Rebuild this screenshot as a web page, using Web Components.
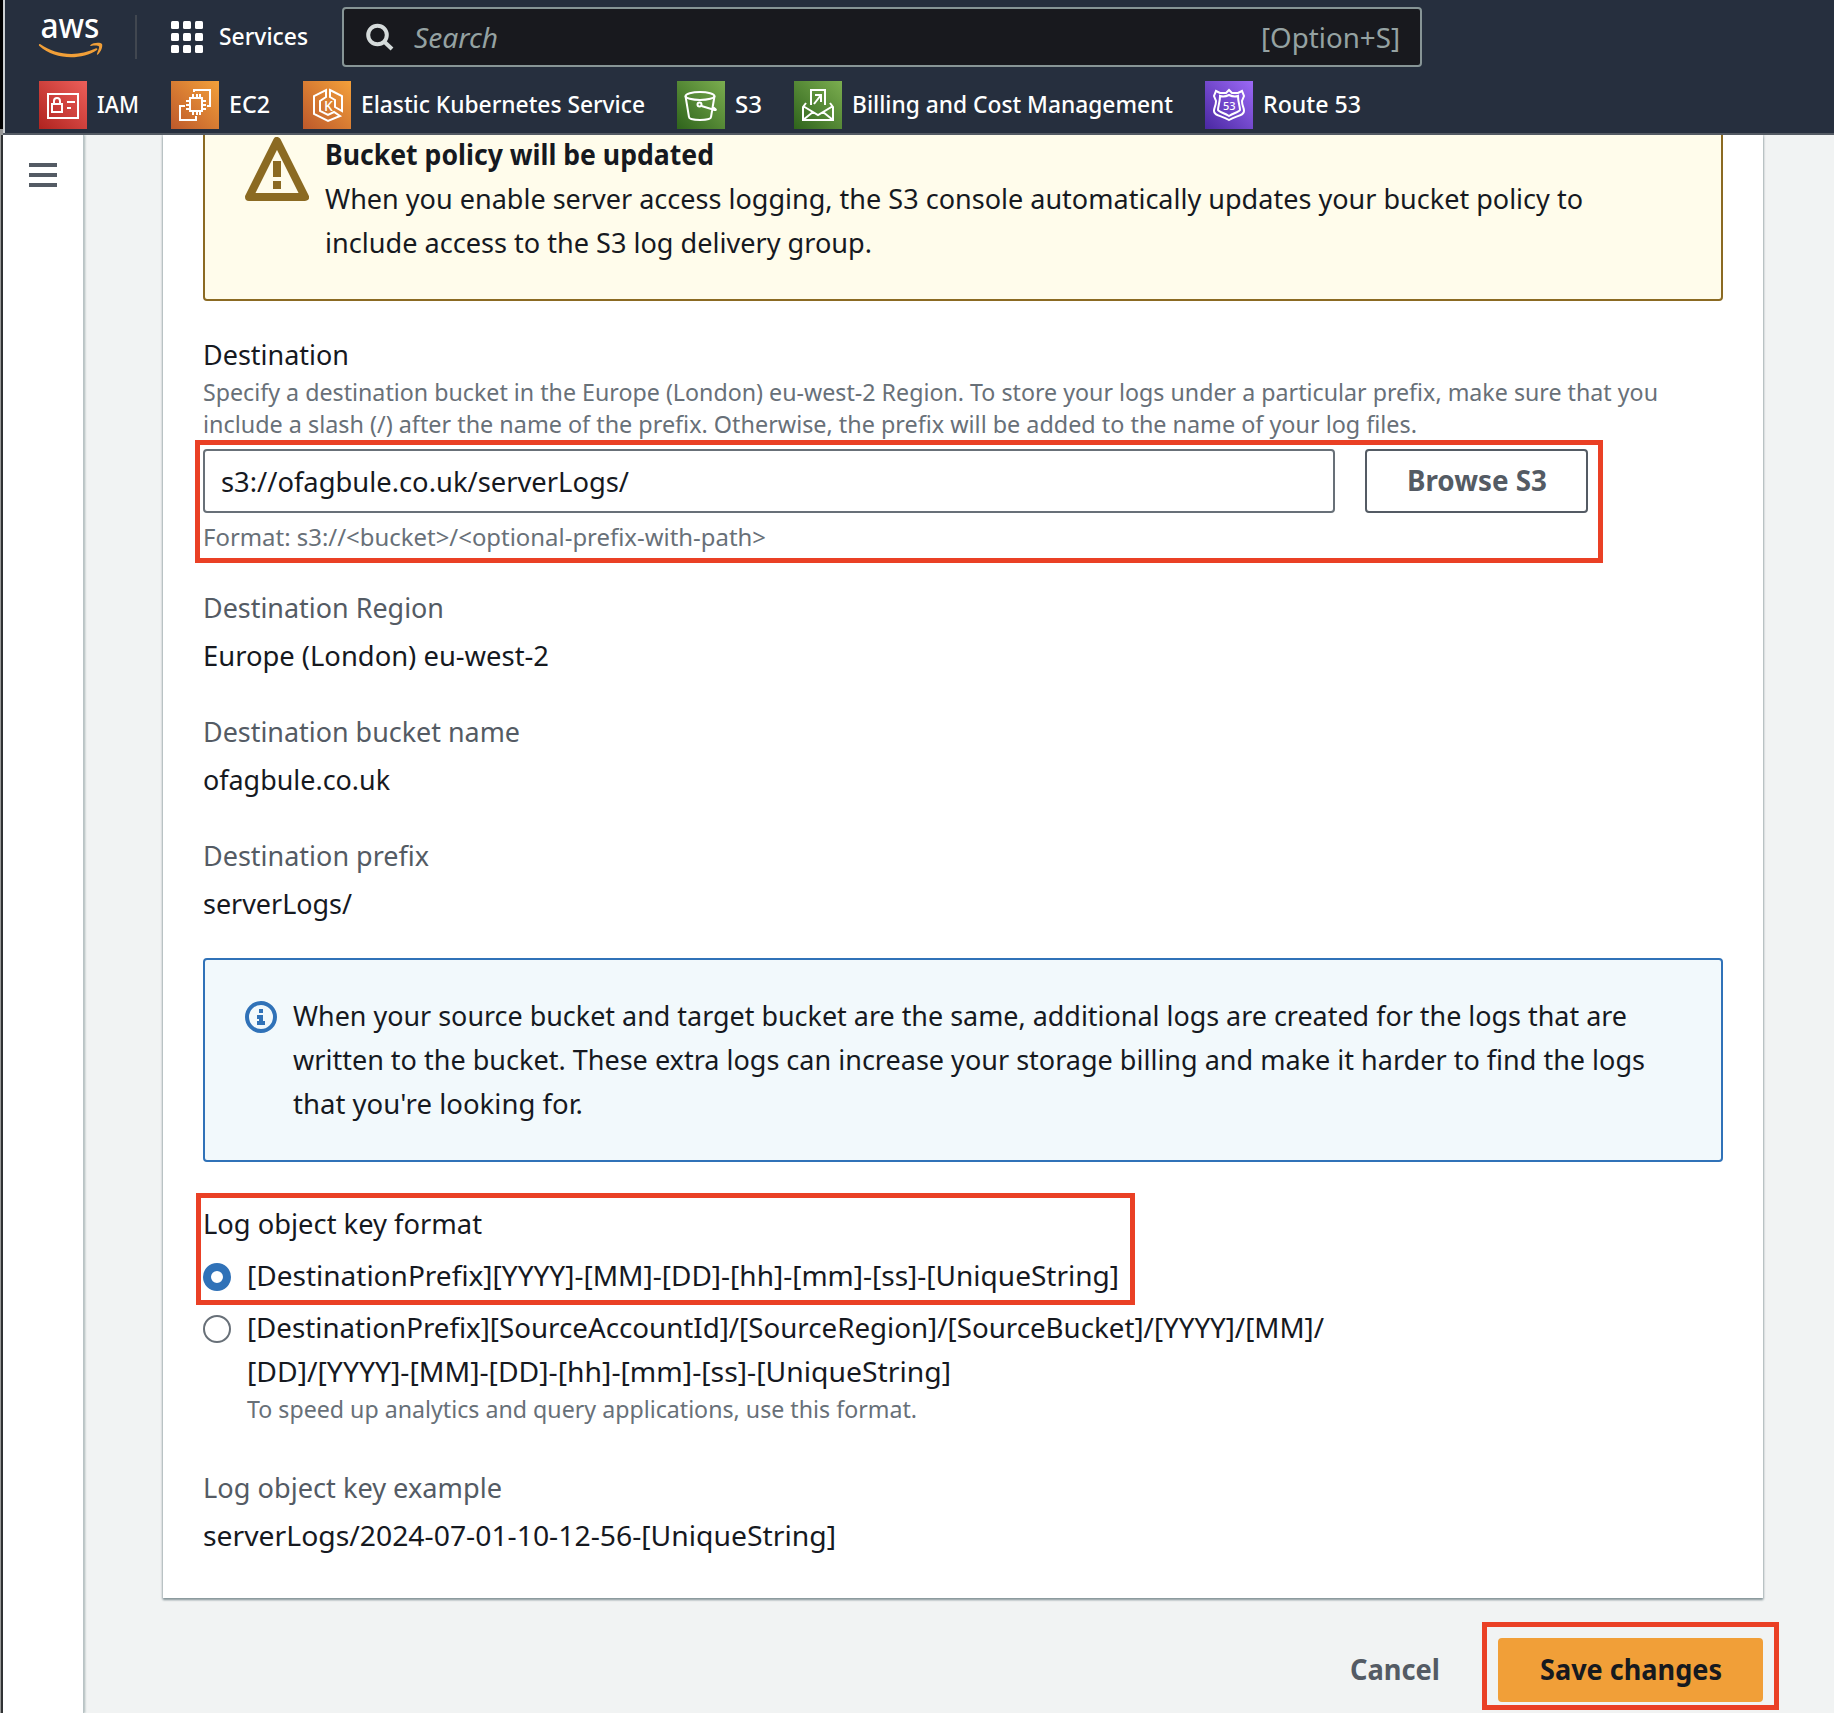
<!DOCTYPE html>
<html lang="en">
<head>
<meta charset="utf-8">
<title>Edit server access logging</title>
<style>
html,body{margin:0;height:1713px;overflow:hidden;background:#f1f3f3}
body{font:28px/44px "Noto Sans","Open Sans",sans-serif;font-weight:450;color:#16191f}
</style>
</head>
<body>
<console-app></console-app>
<script>
const define = (name, html, after) => {
  const t = document.createElement('template');
  t.innerHTML = html;
  customElements.define(name, class extends HTMLElement {
    constructor() {
      super();
      this.attachShadow({ mode: 'open' }).appendChild(t.content.cloneNode(true));
    }
    connectedCallback() { if (after) after(this, this.shadowRoot); }
  });
};

// A single line of text, condensed or widened to the measure given in "w".
define('text-line', `<style>
:host{display:block;white-space:nowrap;flex:none}
span{display:inline-block;transform-origin:0 50%}
</style><span><slot></slot></span>`, (el, root) => {
  const w = +el.getAttribute('w'), s = root.querySelector('span');
  el.style.width = w + 'px';
  const n = s.getBoundingClientRect().width;
  if (w && n) s.style.transform = 'translateY(-1px) scaleX(' + (w / n) + ')';
});

define('service-link', `<style>
:host{display:flex;align-items:center;gap:10px;font-size:24px;font-weight:550;line-height:48px;color:#fff;flex:none}
.i{width:48px;height:48px;display:block}
::slotted(svg){display:block;width:48px;height:48px;fill:none;stroke:#fff;stroke-width:2}
:host([tone=red]) .i{background:linear-gradient(45deg,#b0231f,#ed5f5a)}
:host([tone=orange]) .i{background:linear-gradient(45deg,#bd592b,#f3a03a)}
:host([tone=green]) .i{background:linear-gradient(45deg,#2f641c,#7bad4f)}
:host([tone=purple]) .i{background:linear-gradient(45deg,#4a28a2,#9c69f6)}
</style><div class="i"><slot name="icon"></slot></div><slot></slot>`);

define('search-box', `<style>
:host{display:flex;align-items:center;box-sizing:border-box;width:1080px;height:60px;border:2px solid #879596;border-radius:4px;background:#18191e;color:#95a2a2;padding:0 20px 0 22px}
svg{width:28px;height:28px;margin-right:20px}
i{flex:1}
text-line{position:relative;top:1px}
</style><svg viewBox="0 0 28 28" fill="none" stroke="#d5dbdb" stroke-width="4"><circle cx="11.5" cy="12" r="9.3"/><path d="M18 18.5L26 26"/></svg>
<i><text-line w="84">Search</text-line></i><text-line w="139">[Option+S]</text-line>`);

define('console-header', `<style>
:host{display:flex;flex-direction:column;box-sizing:border-box;height:135px;background:#262f3e;border-bottom:2px solid #545b64;margin-left:3px;box-shadow:inset 2px 0 #ccd0d3}
.top{display:flex;height:74px;padding-left:36px}
.logo{width:64px;height:48px;margin-top:14px;display:block;overflow:visible}
.div{width:2px;height:44px;background:#414750;margin:15px 34px 0 32px}
.grid{display:grid;grid-template-columns:repeat(3,8px);gap:4px;margin-top:21px;height:32px;grid-auto-rows:8px}
.grid b{background:#fff;border-radius:1.5px}
.svc{font-size:24px;font-weight:550;line-height:74px;color:#fff;margin:0 34px 0 16px}
search-box{margin-top:7px}
.fav{display:flex;height:48px;margin-top:7px;padding-left:36px}
</style>
<div class="top">
<svg class="logo" viewBox="0 0 64 48"><text x="1.5" y="24" font-family="Noto Sans" font-weight="500" font-size="35" fill="#fff" textLength="59" lengthAdjust="spacingAndGlyphs">aws</text>
<path d="M1 30C17 41.500 39 43 56.500 34.500C58 33.700 59 35 58 36C42 46.500 16 46 0.400 32C-.6 31 0 29.500 1 30Z" fill="#f19f38"/><path d="M51.500 31C54 28.500 61.500 28.200 63 30C64 32.500 62 37.800 58.800 40.500C58 41 57.700 40.500 58 39.700C59 37 60.500 33.500 60 32.500C59 31.300 55 31.500 52 31.900C51 32 51 31.500 51.500 31Z" fill="#f19f38"/></svg>
<div class="div"></div>
<div class="grid"><b></b><b></b><b></b><b></b><b></b><b></b><b></b><b></b><b></b></div>
<text-line class="svc" w="89">Services</text-line>
<search-box></search-box>
</div>
<div class="fav">
<service-link tone="red" style="width:132px"><svg slot="icon" viewBox="0 0 48 48"><path d="M9 13h30v24H9zM13 23h10v8H13zM15 23v-3a3 3 0 0 1 6 0v3M28 21h8M28 27h4"/></svg><text-line w="42">IAM</text-line></service-link>
<service-link tone="orange" style="width:132px"><svg slot="icon" viewBox="0 0 48 48"><path d="M19 17h12v13H19zM22 17v-4M26 17v-4M29 17v-4M22 34v-4M26 34v-4M29 34v-4M19 20h-4M19 24h-4M19 28h-4M35 20h-4M35 24h-4M35 28h-4M23 11V9h16v16h-3M14 25H9v14h16v-4"/></svg><text-line w="41">EC2</text-line></service-link>
<service-link tone="orange" style="width:374px"><svg slot="icon" viewBox="0 0 48 48"><path d="M23 9v7l-6 4v10l8 4 6-3 6 4-12 5-14-7V15zM27 9l12 6v15l-7-4v-7l-5-3z"/><text x="21" y="29.500" font-family="Noto Sans" font-size="14" fill="#fff" stroke="none">K</text></svg><text-line w="284">Elastic Kubernetes Service</text-line></service-link>
<service-link tone="green" style="width:117px"><svg slot="icon" viewBox="0 0 48 48"><ellipse cx="23" cy="15" rx="14.500" ry="4"/><path d="M8.500 15l3.500 21c0 4 22 4 22 0l3.500-21M24.500 25l13 4c2 .2 2-.6-1-2.500"/><circle cx="22.500" cy="23.500" r="2"/></svg><text-line w="27">S3</text-line></service-link>
<service-link tone="green" style="width:411px"><svg slot="icon" viewBox="0 0 48 48"><path d="M17 24V9h14v15M12 22l-3 4v13h30V26l-3-4M9 25l15 9 15-9M9 39l10-8M39 39l-10-8M20 23l7-9M21 14h6v7"/></svg><text-line w="321">Billing and Cost Management</text-line></service-link>
<service-link tone="purple"><svg slot="icon" viewBox="0 0 48 48"><path d="M24 9l-3 3h-6l-4-2-2 5 2 5c0 5-2 6-2 10 0 5 7 4 15 9 8-5 15-4 15-9 0-4-2-5-2-10l2-5-2-5-4 2h-6z"/><path d="M24 14c-4 2-6 2-9 1 0 6-2 10-2 14 1 2 6 3 11 6 5-3 10-4 11-6 0-4-2-8-2-14-3 1-5 1-9-1z"/><text x="18" y="29" font-family="Noto Sans" font-weight="500" font-size="11" fill="#fff" stroke="none">53</text></svg><text-line w="98">Route 53</text-line></service-link>
</div>`);

define('side-rail', `<style>
:host{display:block;width:80px;background:#fff;border-left:2px solid #303234;margin-left:1px;border-right:1px solid #b9c3c5;box-shadow:1px 0 2px #aab7b8;z-index:1}
div{display:flex;flex-direction:column;gap:6px;padding:28px 0 0 26px}
b{width:28px;height:4px;background:#545b64}
</style><div><b></b><b></b><b></b></div>`);

define('alert-box', `<style>
:host{display:flex;box-sizing:border-box;width:1520px;border:2px solid #3072b8;border-radius:4px;background:#f2f9fc;padding:34px 40px}
svg{flex:none;display:block}
.warn{display:none;width:64px;height:64px;margin:4px 16px 0 0}
.info{width:32px;height:32px;margin:7px 16px 0 0}
:host([type=warning]){border-color:#8b6a22;background:#fffceb}
:host([type=warning]) .warn{display:block}
:host([type=warning]) .info{display:none}
</style>
<svg class="warn" viewBox="0 0 64 64" fill="none" stroke="#8b6a22"><path d="M32 4L60 60H4Z" stroke-width="8" stroke-linejoin="round"/><path d="M32 24v16M32 44v8" stroke-width="8"/></svg>
<svg class="info" viewBox="0 0 32 32"><circle cx="16" cy="16" r="14" fill="none" stroke="#3072b8" stroke-width="4"/><path d="M14 8h4v4h-4zM12 14h6v6h2v4h-8v-4h2v-2h-2z" fill="#3072b8"/></svg>
<div><slot></slot></div>`);

define('small-text', `<style>:host{display:block;font-size:24px;line-height:32px;color:#687078}</style><slot></slot>`);

define('key-value', `<style>
:host{display:flex;flex-direction:column;gap:4px}
.k{color:#545b64}
</style><div class="k"><slot name="label"></slot></div><div><slot></slot></div>`);

define('text-field', `<style>
:host{display:block;box-sizing:border-box;width:1132px;height:64px;border:2px solid #687078;border-radius:4px;background:#fff;padding:0 16px;line-height:62px}
</style><slot></slot>`);

define('action-button', `<style>
:host{display:flex;justify-content:center;box-sizing:border-box;height:64px;line-height:61px;border:2px solid #545b64;border-radius:4px;color:#545b64;font-weight:700}
:host([variant=primary]){background:#f19f38;border-color:#f19f38;color:#16191f}
:host([variant=link]){border-color:transparent}
</style><slot></slot>`);

define('radio-option', `<style>
:host{display:flex;gap:16px}
.c{box-sizing:border-box;flex:none;width:28px;height:28px;margin-top:9px;border:2px solid #687078;border-radius:50%;background:#fff}
:host([checked]) .c{border:8px solid #3072b8}
</style><div class="c"></div><div><slot></slot></div>`);

// Rectangular marker laid over the page.
define('highlight-box', `<style>
:host{position:absolute;z-index:5;box-sizing:border-box;border:5px solid #ea4025;pointer-events:none}
</style>`);

define('logging-panel', `<style>
:host{display:flow-root;box-sizing:border-box;width:1600px;height:1463px;background:#fff;padding:0 40px;box-shadow:0 2px 2px #87969a,0 0 2px 1px #c3cacd}
alert-box[type=warning]{height:204px;margin-top:-38px}
.dest{margin-top:32px}
.row{display:flex;gap:30px;margin-top:8px}
.row action-button{width:223px}
.fmt{margin-top:9px}
.kv{display:flex;flex-direction:column;gap:32px;margin:32px 0 32px}
.radios{display:flex;flex-direction:column;gap:8px;margin:8px 0 40px}
.log{margin-top:40px}
</style>
<alert-box type="warning">
<text-line w="389" style="font-weight:700">Bucket policy will be updated</text-line>
<text-line w="1258">When you enable server access logging, the S3 console automatically updates your bucket policy to</text-line>
<text-line w="547">include access to the S3 log delivery group.</text-line>
</alert-box>
<div class="dest"><text-line w="146">Destination</text-line>
<small-text><text-line w="1455">Specify a destination bucket in the Europe (London) eu-west-2 Region. To store your logs under a particular prefix, make sure that you</text-line>
<text-line w="1214">include a slash (/) after the name of the prefix. Otherwise, the prefix will be added to the name of your log files.</text-line></small-text></div>
<div class="row"><text-field><text-line w="408">s3://ofagbule.co.uk/serverLogs/</text-line></text-field><action-button><text-line w="140">Browse S3</text-line></action-button></div>
<small-text class="fmt"><text-line w="563">Format: s3://&lt;bucket&gt;/&lt;optional-prefix-with-path&gt;</text-line></small-text>
<div class="kv">
<key-value><text-line slot="label" w="241">Destination Region</text-line><text-line w="346">Europe (London) eu-west-2</text-line></key-value>
<key-value><text-line slot="label" w="317">Destination bucket name</text-line><text-line w="187">ofagbule.co.uk</text-line></key-value>
<key-value><text-line slot="label" w="226">Destination prefix</text-line><text-line w="149">serverLogs/</text-line></key-value>
</div>
<alert-box>
<text-line w="1334">When your source bucket and target bucket are the same, additional logs are created for the logs that are</text-line>
<text-line w="1352">written to the bucket. These extra logs can increase your storage billing and make it harder to find the logs</text-line>
<text-line w="290">that you're looking for.</text-line>
</alert-box>
<text-line class="log" w="279">Log object key format</text-line>
<div class="radios">
<radio-option checked><text-line w="872">[DestinationPrefix][YYYY]-[MM]-[DD]-[hh]-[mm]-[ss]-[UniqueString]</text-line></radio-option>
<radio-option><text-line w="1077">[DestinationPrefix][SourceAccountId]/[SourceRegion]/[SourceBucket]/[YYYY]/[MM]/</text-line>
<text-line w="704">[DD]/[YYYY]-[MM]-[DD]-[hh]-[mm]-[ss]-[UniqueString]</text-line>
<small-text><text-line w="670">To speed up analytics and query applications, use this format.</text-line></small-text></radio-option>
</div>
<key-value><text-line slot="label" w="299">Log object key example</text-line><text-line w="633">serverLogs/2024-07-01-10-12-56-[UniqueString]</text-line></key-value>`);

define('console-app', `<style>
:host{display:flex;flex-direction:column;position:relative;width:1834px;height:1713px;overflow:hidden;background:linear-gradient(#000 129px,#989898 129px) 0 0/3px 100% no-repeat}
console-header{position:relative;z-index:3}
.body{display:flex;height:1578px}
main{flex:1;background:#f1f3f3;padding-left:79px;overflow:hidden}
.actions{display:flex;width:1600px;justify-content:flex-end;gap:56px;margin-top:40px}
</style>
<console-header></console-header>
<div class="body"><side-rail></side-rail>
<main><logging-panel></logging-panel>
<div class="actions"><action-button variant="link"><text-line w="90">Cancel</text-line></action-button><action-button variant="primary" style="width:265px"><text-line w="182">Save changes</text-line></action-button></div>
</main></div>
<highlight-box style="left:195px;top:440px;width:1408px;height:123px"></highlight-box>
<highlight-box style="left:196px;top:1193px;width:939px;height:112px"></highlight-box>
<highlight-box style="left:1482px;top:1622px;width:297px;height:88px"></highlight-box>`);
</script>
</body>
</html>
